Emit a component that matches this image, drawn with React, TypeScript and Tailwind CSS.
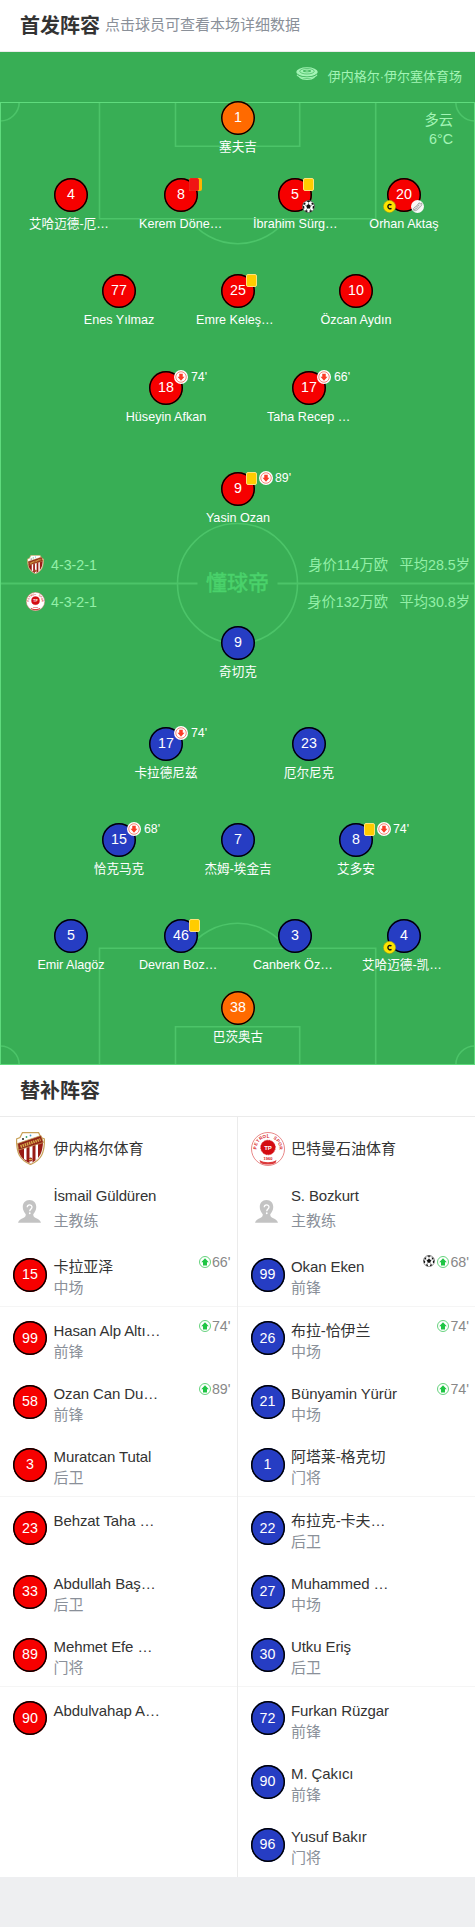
type Player = {
  no: number;
  name: string;
  cards?: "yellow" | "red";
  off?: string;
  goal?: boolean;
  captain?: boolean;
  assist?: boolean;
};

type Sub = {
  no: number;
  name: string;
  role?: string;
  on?: string;
  goal?: boolean;
};

type Line = { height: string; players: Player[]; keeper?: boolean };

const homeLines: Line[] = [
  { height: "h-[77px]", keeper: true, players: [{ no: 1, name: "塞夫吉" }] },
  {
    height: "h-[96px]",
    players: [
      { no: 4, name: "艾哈迈德-厄…" },
      { no: 8, name: "Kerem Döne…", cards: "red" },
      { no: 5, name: "İbrahim Sürg…", cards: "yellow", goal: true },
      { no: 20, name: "Orhan Aktaş", captain: true, assist: true },
    ],
  },
  {
    height: "h-[97px]",
    players: [
      { no: 77, name: "Enes Yılmaz" },
      { no: 25, name: "Emre Keleş…", cards: "yellow" },
      { no: 10, name: "Özcan Aydın" },
    ],
  },
  {
    height: "h-[101px]",
    players: [
      { no: 18, name: "Hüseyin Afkan", off: "74'" },
      { no: 17, name: "Taha Recep …", off: "66'" },
    ],
  },
  { height: "h-[68px]", players: [{ no: 9, name: "Yasin Ozan", cards: "yellow", off: "89'" }] },
];

const awayLines: Line[] = [
  { height: "h-[101px]", players: [{ no: 9, name: "奇切克" }] },
  {
    height: "h-[96px]",
    players: [
      { no: 17, name: "卡拉德尼兹", off: "74'" },
      { no: 23, name: "厄尔尼克" },
    ],
  },
  {
    height: "h-[96px]",
    players: [
      { no: 15, name: "恰克马克", off: "68'" },
      { no: 7, name: "杰姆-埃金吉" },
      { no: 8, name: "艾多安", cards: "yellow", off: "74'" },
    ],
  },
  {
    height: "h-[72px]",
    players: [
      { no: 5, name: "Emir Alagöz" },
      { no: 46, name: "Devran Boz…", cards: "yellow" },
      { no: 3, name: "Canberk Öz…" },
      { no: 4, name: "艾哈迈德-凯…", captain: true },
    ],
  },
  { height: "h-[74px]", keeper: true, players: [{ no: 38, name: "巴茨奥古" }] },
];

const homeSubs: Sub[] = [
  { no: 15, name: "卡拉亚泽", role: "中场", on: "66'" },
  { no: 99, name: "Hasan Alp Altı…", role: "前锋", on: "74'" },
  { no: 58, name: "Ozan Can Du…", role: "前锋", on: "89'" },
  { no: 3, name: "Muratcan Tutal", role: "后卫" },
  { no: 23, name: "Behzat Taha …" },
  { no: 33, name: "Abdullah Baş…", role: "后卫" },
  { no: 89, name: "Mehmet Efe …", role: "门将" },
  { no: 90, name: "Abdulvahap A…" },
];

const awaySubs: Sub[] = [
  { no: 99, name: "Okan Eken", role: "前锋", on: "68'", goal: true },
  { no: 26, name: "布拉-恰伊兰", role: "中场", on: "74'" },
  { no: 21, name: "Bünyamin Yürür", role: "中场", on: "74'" },
  { no: 1, name: "阿塔莱-格克切", role: "门将" },
  { no: 22, name: "布拉克-卡夫…", role: "后卫" },
  { no: 27, name: "Muhammed …", role: "中场" },
  { no: 30, name: "Utku Eriş", role: "后卫" },
  { no: 72, name: "Furkan Rüzgar", role: "前锋" },
  { no: 90, name: "M. Çakıcı", role: "前锋" },
  { no: 96, name: "Yusuf Bakır", role: "门将" },
];

// column widths by number of players in the line
const lineCols: Record<number, string> = {
  1: "pl-[178px] grid-cols-[120px]",
  2: "pl-[94px] grid-cols-[144px_142px]",
  3: "pl-[60px] grid-cols-[118px_120px_116px]",
  4: "pl-4 grid-cols-[110px_110px_118px_100px]",
};

function Ball({ className }: { className: string }) {
  return (
    <svg viewBox="0 0 26 26" className={className}>
      <circle cx="13" cy="13" r="12" fill="#fff" stroke="#555" strokeWidth="1.4" />
      <g fill="#111">
        <path d="M13 8.2l4.6 3.4-1.8 5.4h-5.6l-1.8-5.4z" />
        <path d="M8.6 2.4L13 4.6l4.4-2.2L13 1z" />
        <path d="M1.2 11l3.6 2.2-.4 4.6-2.2-.8z" />
        <path d="M24.8 11l-3.6 2.2.4 4.6 2.2-.8z" />
        <path d="M7.4 20l3.6 1-.6 3.6-4.4-2.2z" />
        <path d="M18.6 20l-3.6 1 .6 3.6 4.4-2.2z" />
        <path d="M3.6 6.2l3.8-.6-1 3.6-3.4.8z" />
        <path d="M22.4 6.2l-3.8-.6 1 3.6 3.4.8z" />
      </g>
      <path d="M13 8.2V4.4M17.6 11.6l3-2M15.8 17l2 3.2M10.2 17l-2 3.2M8.4 11.6l-3-2" stroke="#333" strokeWidth="1" />
    </svg>
  );
}

function OffIcon({ className }: { className: string }) {
  return (
    <svg viewBox="0 0 28 28" className={className}>
      <circle cx="14" cy="14" r="14" fill="#fff" />
      <circle cx="14" cy="14" r="10.5" fill="none" stroke="#f0604c" strokeWidth="1.5" />
      <path d="M10.500 7.500h7v6H21L14 21.500l-7-8h3.500z" fill="#fb3c26" />
    </svg>
  );
}

function OnIcon() {
  return (
    <svg viewBox="0 0 24 24" className="h-3 w-3">
      <circle cx="12" cy="12" r="11" fill="#fff" stroke="#3fc65c" strokeWidth="1.6" />
      <path d="M12 4.500l7.500 8H16v6.500H8v-6.500H4.500z" fill="#1fc544" />
    </svg>
  );
}

function BootIcon({ className }: { className: string }) {
  return (
    <svg viewBox="0 0 26 26" className={className}>
      <circle cx="13" cy="13" r="13" fill="#f8f8f8" />
      <path
        d="M4.5 17.5c2-3.5 6-4 8.5-7.5l3-4.5 2.5 2 3-1.5c1 4-1 6.5-4 8.5l-4 4.5c-3 2.5-6.5 3-8 2z"
        fill="#e3e3e3"
        stroke="#777"
        strokeWidth="1.1"
      />
      <path d="M11 12l3 3M13.5 9.5l3 3M6 19.5l7-4" stroke="#777" strokeWidth="1" />
    </svg>
  );
}

function CaptainBadge({ className }: { className: string }) {
  return (
    <svg viewBox="0 0 26 26" className={className}>
      <circle cx="13" cy="13" r="12.3" fill="#ffe400" stroke="#8d9a1c" strokeWidth="1.2" />
      <path d="M17 9.8c-3.5-2-7.2-.6-7.2 3.4s3.7 5.4 7.2 3.4" fill="none" stroke="#111" strokeWidth="2.8" />
    </svg>
  );
}

function Stadium() {
  return (
    <svg viewBox="0 0 44 26" className="h-[13px] w-[22px]" fill="none">
      <ellipse cx="22" cy="10" rx="21.5" ry="9.500" fill="#a3f4b5" />
      <ellipse cx="22" cy="8.500" rx="14.5" ry="5.5" stroke="#38ae55" strokeWidth="1.3" />
      <ellipse cx="22" cy="8" rx="8" ry="2.4" fill="#38ae55" />
      <path d="M17 8h10M22 5.8v4.4" stroke="#a3f4b5" strokeWidth="1.4" />
      <path d="M2 13c4 9 36 9 40 0" stroke="#38ae55" strokeWidth="1.2" />
      <path d="M2 15.500c5 8 35 8 40 0" stroke="#a3f4b5" strokeWidth="2.4" />
      <path d="M7 20.500c7 5.500 23 5.500 30 0" stroke="#a3f4b5" strokeWidth="2.6" />
    </svg>
  );
}

function HomeCrest({ className }: { className: string }) {
  return (
    <svg viewBox="0 0 58 66" className={className}>
      <path d="M13 1h32l5 10 7 3c0 28-6 42-28 51C7 56 1 42 1 14l7-3z" fill="#fff" stroke="#c9a25a" strokeWidth="2.5" />
      <path d="M4 32L54 18c0 22-7 37-25 45C13 56 6 47 4 32z" fill="#981b14" />
      <path d="M16 32l5-2v27l-5-3zM27 29l6-2v34l-4 2-2-1zM39 25l5-1v29l-5 4z" fill="#fff" />
      <path d="M3 23L50 7l5 14L5 36z" fill="#8f2317" stroke="#c9a25a" strokeWidth="1.5" />
      <path d="M9 29l40-14" stroke="#d6a848" strokeWidth="6" strokeDasharray="3 1.5" />
      <circle cx="14" cy="14" r="2" fill="#222" />
      <circle cx="21" cy="10" r="1.8" fill="#39a569" />
      <circle cx="29" cy="7" r="1.8" fill="#459bd3" />
      <circle cx="29" cy="55" r="4" fill="#981b14" />
      <path d="M26 55h6" stroke="#d6a848" strokeWidth="3" />
    </svg>
  );
}

function AwayCrest({ className }: { className: string }) {
  return (
    <svg viewBox="0 0 68 68" className={className}>
      <circle cx="34" cy="34" r="33" fill="#fff" stroke="#e26a6a" strokeWidth="1.6" />
      {/* club name runs round the top half, one letter per step */}
      {"PETROL SPOR".split("").map(
        (letter, i) =>
          letter !== " " && (
            <text
              key={i}
              x="34"
              y="11"
              fontSize="9"
              fontWeight="700"
              fill="#d8262a"
              textAnchor="middle"
              transform={`rotate(${(i - 5) * 17} 34 34)`}
            >
              {letter}
            </text>
          ),
      )}
      <circle cx="34" cy="31" r="14.5" fill="#d40d12" stroke="#d40d12" strokeWidth="2" strokeDasharray="2 1.5" />
      <text x="34" y="35.5" fontSize="12" fontWeight="700" fill="#fff" textAnchor="middle">
        TP
      </text>
      <text x="34" y="55.5" fontSize="8" fontWeight="700" fill="#d40d12" textAnchor="middle">
        1960
      </text>
      <path d="M17 56c9 6 25 6 34 0l-2 6c-9 4-21 4-30 0z" fill="#dc3a3c" />
    </svg>
  );
}

function Avatar() {
  return (
    <svg viewBox="0 0 46 46" className="h-[23px] w-[23px]">
      <path
        d="M23 0c8.500 0 13.500 6 13.500 14 0 6-3 11-6 14.500 0 4 1 5.500 5 7.500 4.500 2 9 4 10.500 9.500H0C1.500 40 6 38 10.500 36c4-2 5-3.500 5-7.500-3-3.500-6-8.500-6-14.500C9.500 6 14.500 0 23 0z"
        fill="#c3c3c3"
      />
      <path d="M18.5 14.5c0-6 9.5-6 9.5-.5 0 4-4.5 4-4.5 8.5" fill="none" stroke="#fff" strokeWidth="2.6" />
      <circle cx="23.5" cy="26.5" r="1.8" fill="#fff" />
    </svg>
  );
}

function PitchLines() {
  return (
    <svg viewBox="0 0 475 963" className="absolute left-0 top-[50px] h-[963px] w-[475px]" fill="none">
      <g stroke="#4cc469" strokeWidth="1.6">
        <path d="M99.5 0v116.7h276.2V0M175.5 0v44.2h124.2V0" />
        <path d="M189 116.7a60 60 0 0 0 97.5 0" />
        <path d="M99.5 963V846.3h276.2V963M175.5 963v-38.2h124.2V963" />
        <path d="M189 846.3a60 60 0 0 1 97.5 0" />
        <path d="M19.2 0A19 19 0 0 1 0 19M455.8 0A19 19 0 0 0 475 19" />
        <path d="M19.2 963A19 19 0 0 0 0 944M455.8 963a19 19 0 0 1 19.2-19" />
        <circle cx="237.5" cy="481.5" r="60" />
        <path d="M0 481.5h197.5M277.5 481.5H475" strokeWidth="2" />
      </g>
      <rect x=".5" y=".5" width="474" height="962" stroke="#5fdb7d" />
    </svg>
  );
}

function Shirt({ no, color }: { no: number; color: string }) {
  return (
    <div
      className={`flex h-[34px] w-[34px] shrink-0 items-center justify-center rounded-full text-[14.25px] text-white shadow-[inset_0_0_0_1.5px_#000] ${color}`}
    >
      {no}
    </div>
  );
}

function Marker({ player, color }: { player: Player; color: string }) {
  // cut names keep the full label width and start at its left edge
  const cut = player.name.endsWith("…");

  return (
    <div className="flex flex-col items-center">
      <div className="relative">
        <Shirt no={player.no} color={color} />
        <div className="absolute -top-[1px] left-[25px] flex h-[14px] items-center text-white">
          {player.cards === "yellow" && (
            <span className="mr-[2px] h-[13px] w-[11px] rounded-[2px] border border-[#ffe27a] bg-[#ffcc00]" />
          )}
          {player.cards === "red" && (
            <span className="flex h-[13px] w-[12.5px] rounded-[2px] bg-[#ffb400]">
              <span className="h-[13px] w-[10px] rounded-[2px] border border-[#e8221c] bg-[#f01414]" />
            </span>
          )}
          {player.off && (
            <>
              <OffIcon className="h-[14px] w-[14px] shrink-0" />
              <span className={`-mt-px text-[12.35px] leading-[14px] ${player.cards ? "ml-[2px]" : "ml-[3px]"}`}>
                {player.off}
              </span>
            </>
          )}
        </div>
        {player.captain && <CaptainBadge className="absolute -left-[4px] top-[22px] h-[13px] w-[13px]" />}
        {player.goal && <Ball className="absolute left-[24px] top-[22px] h-[13px] w-[13px]" />}
        {player.assist && <BootIcon className="absolute left-[24px] top-[22px] h-[13px] w-[13px]" />}
      </div>
      <div className={`mt-[3px] whitespace-nowrap text-[12.6px] leading-[18px] text-white ${cut ? "w-[84px]" : ""}`}>
        {player.name}
      </div>
    </div>
  );
}

function Lines({ lines, color }: { lines: Line[]; color: string }) {
  return (
    <>
      {lines.map((line, i) => (
        <div key={i} className={`grid ${line.height} ${lineCols[line.players.length]}`}>
          {line.players.map((p) => (
            <Marker key={p.no} player={p} color={line.keeper ? "bg-[#ff6a00]" : color} />
          ))}
        </div>
      ))}
    </>
  );
}

function SubRow({ sub, color, divided }: { sub: Sub; color: string; divided: boolean }) {
  return (
    <div
      className={`flex h-[63.33px] items-center pl-[13px] pr-[6px] ${divided ? "shadow-[inset_0_-1px_0_#f5f5f5]" : ""}`}
    >
      <Shirt no={sub.no} color={color} />
      <div className="ml-[6.5px] mt-[5px] h-[42px] flex-1 whitespace-nowrap text-[15px] leading-[21px]">
        <div className="tracking-[-0.1px] text-[#333]">{sub.name}</div>
        {sub.role && <div className="text-[#8a9099]">{sub.role}</div>}
      </div>
      {sub.on && (
        <div className="flex items-center self-start pt-[11px] text-[14.25px] leading-4 text-[#888]">
          {sub.goal && <Ball className="-mt-[2px] mr-[2px] h-[12px] w-[12px]" />}
          <OnIcon />
          <span className="ml-px">{sub.on}</span>
        </div>
      )}
    </div>
  );
}

type BenchProps = { team: string; crest: React.ReactNode; coach: string; subs: Sub[]; color: string };

function Bench({ team, crest, coach, subs, color }: BenchProps) {
  return (
    <div>
      <div className="flex h-[63px] items-center pl-[13px] text-[15px] text-[#333]">
        <div className="flex w-[34px] justify-center">{crest}</div>
        <div className="ml-[6.5px] mt-[2px]">{team}</div>
      </div>
      <div className="flex h-[63.33px] pl-[13px] text-[15px]">
        <div className="w-[34px] pl-[4.5px] pt-[20px]">
          <Avatar />
        </div>
        <div className="ml-[6.5px] pt-[3px] leading-[25px]">
          <div className="tracking-[-0.15px] text-[#333]">{coach}</div>
          <div className="text-[#8a9099]">主教练</div>
        </div>
      </div>
      {subs.map((s, i) => (
        <SubRow key={s.no} sub={s} color={color} divided={i % 3 === 0 && i < 9} />
      ))}
    </div>
  );
}

function InfoRow({ crest, value, age }: { crest: React.ReactNode; value: string; age: string }) {
  return (
    <div className="flex h-[37px] items-center pl-[25px] pr-[5px]">
      <div className="-mt-[2px] flex w-5 justify-center">{crest}</div>
      <span className="ml-[6px] flex-1">4-3-2-1</span>
      <span>{value}</span>
      <span className="ml-[11.5px]">{age}</span>
    </div>
  );
}

export default function App() {
  return (
    <div className="min-h-[1927px] w-[475px] bg-[#eeeff1] font-['Liberation_Sans','Noto_Sans_CJK_SC',sans-serif]">
      <header className="flex h-[52px] items-center border-b border-[#ebebeb] bg-white pl-5">
        <h2 className="text-[20px] font-bold text-[#333]">首发阵容</h2>
        <span className="ml-[5px] text-[15px] text-[#8a9099]">点击球员可查看本场详细数据</span>
      </header>

      <section className="relative h-[1013px] bg-[#38ae55]">
        <PitchLines />
        <div className="relative">
          <div className="flex h-[49px] items-center justify-end pr-[13px] text-[#a3f4b5]">
            <div className="-mt-[6px] mr-[10px]">
              <Stadium />
            </div>
            <span className="text-[13px]">伊内格尔·伊尔塞体育场</span>
          </div>
          <div className="absolute right-[22px] top-[59px] text-right text-[14.25px] leading-[19px] text-[#a3f4b5]">
            <div>多云</div>
            <div>6°C</div>
          </div>
          <Lines lines={homeLines} color="bg-[#f60000]" />
          <div className="relative h-[86px] pt-[7px] text-[14.25px] text-[#93f0a8]">
            <InfoRow crest={<HomeCrest className="h-[19px] w-[17px]" />} value="身价114万欧" age="平均28.5岁" />
            <InfoRow crest={<AwayCrest className="h-[19px] w-[19px]" />} value="身价132万欧" age="平均30.8岁" />
            <div className="absolute left-[206px] top-[31px] text-[21px] leading-6 text-[#4ad26b] [-webkit-text-stroke:0.5px_#4ad26b]">
              懂球帝
            </div>
          </div>
          <Lines lines={awayLines} color="bg-[#263dc3]" />
        </div>
      </section>

      <section className="bg-white">
        <div className="flex h-[52px] items-center border-b border-[#ebebeb] pl-5">
          <h2 className="text-[20px] font-bold text-[#333]">替补阵容</h2>
        </div>
        <div className="grid h-[759.67px] grid-cols-2">
          <div className="border-r border-[#ebebeb]">
            <Bench
              team="伊内格尔体育"
              crest={<HomeCrest className="h-[33px] w-[29px]" />}
              coach="İsmail Güldüren"
              subs={homeSubs}
              color="bg-[#f60000]"
            />
          </div>
          <Bench
            team="巴特曼石油体育"
            crest={<AwayCrest className="h-[34px] w-[34px]" />}
            coach="S. Bozkurt"
            subs={awaySubs}
            color="bg-[#263dc3]"
          />
        </div>
      </section>
    </div>
  );
}
